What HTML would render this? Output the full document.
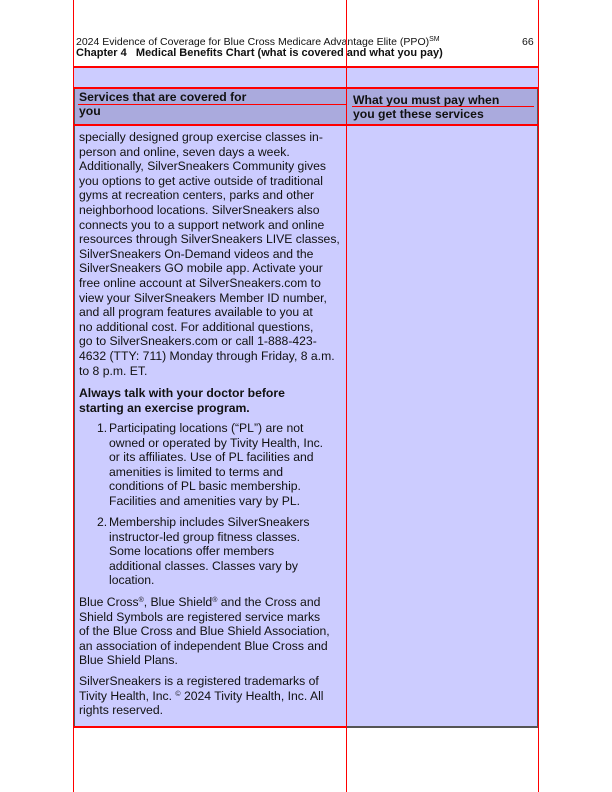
<!DOCTYPE html>
<html><head><meta charset="utf-8"><style>
body{margin:0;width:612px;height:792px;position:relative;background:#fff;font-family:"Liberation Sans",sans-serif;color:#111;overflow:hidden}
.a{position:absolute;white-space:nowrap}
.l{position:absolute;white-space:nowrap;font-size:12.2px;line-height:14px;left:79px}
.b{font-weight:bold}
.r{position:absolute;background:#f00}
sup{font-size:7px;line-height:0;vertical-align:4px}
</style></head><body>
<div class="a" style="left:76px;top:36px;font-size:10.5px;line-height:12px">2024 Evidence of Coverage for Blue Cross Medicare Advantage Elite (PPO)<sup>SM</sup></div>
<div class="a" style="left:522px;top:36px;font-size:10.5px;line-height:12px">66</div>
<div class="a b" style="left:76px;top:47px;font-size:11px;line-height:12px">Chapter 4&nbsp;&nbsp; Medical Benefits Chart (what is covered and what you pay)</div>
<div class="a" style="left:73px;top:66px;width:465px;height:661px;background:#ccccff"></div>
<div class="a" style="left:74px;top:88px;width:464px;height:37px;background:#aaaadd"></div>
<div class="a" style="left:73px;top:88px;width:2px;height:640px;background:#555"></div>
<div class="a" style="left:73px;top:726px;width:466px;height:2px;background:#555"></div>
<div class="a" style="left:537px;top:88px;width:2px;height:640px;background:#555"></div>
<div class="l b" style="top:90px">Services that are covered for</div>
<div class="l b" style="top:104px">you</div>
<div class="l b" style="left:353px;top:93px">What you must pay when</div>
<div class="l b" style="left:353px;top:107px">you get these services</div>
<div class="l" style="top:130px">specially designed group exercise classes in-</div>
<div class="l" style="top:144.6px">person and online, seven days a week.</div>
<div class="l" style="top:159.2px">Additionally, SilverSneakers Community gives</div>
<div class="l" style="top:173.8px">you options to get active outside of traditional</div>
<div class="l" style="top:188.4px">gyms at recreation centers, parks and other</div>
<div class="l" style="top:203px">neighborhood locations. SilverSneakers also</div>
<div class="l" style="top:217.6px">connects you to a support network and online</div>
<div class="l" style="top:232.2px">resources through SilverSneakers LIVE classes,</div>
<div class="l" style="top:246.8px">SilverSneakers On-Demand videos and the</div>
<div class="l" style="top:261.4px">SilverSneakers GO mobile app. Activate your</div>
<div class="l" style="top:276px">free online account at SilverSneakers.com to</div>
<div class="l" style="top:290.6px">view your SilverSneakers Member ID number,</div>
<div class="l" style="top:305.2px">and all program features available to you at</div>
<div class="l" style="top:319.8px">no additional cost. For additional questions,</div>
<div class="l" style="top:334.4px">go to SilverSneakers.com or call 1-888-423-</div>
<div class="l" style="top:349px">4632 (TTY: 711) Monday through Friday, 8 a.m.</div>
<div class="l" style="top:363.6px">to 8 p.m. ET.</div>
<div class="l b" style="top:386px">Always talk with your doctor before</div>
<div class="l b" style="top:401px">starting an exercise program.</div>
<div class="l" style="left:97px;top:421px">1.</div>
<div class="l" style="left:109px;top:421px">Participating locations (“PL”) are not</div>
<div class="l" style="left:109px;top:435.6px">owned or operated by Tivity Health, Inc.</div>
<div class="l" style="left:109px;top:450.2px">or its affiliates. Use of PL facilities and</div>
<div class="l" style="left:109px;top:464.8px">amenities is limited to terms and</div>
<div class="l" style="left:109px;top:479.4px">conditions of PL basic membership.</div>
<div class="l" style="left:109px;top:494px">Facilities and amenities vary by PL.</div>
<div class="l" style="left:97px;top:515px">2.</div>
<div class="l" style="left:109px;top:515px">Membership includes SilverSneakers</div>
<div class="l" style="left:109px;top:529.6px">instructor-led group fitness classes.</div>
<div class="l" style="left:109px;top:544.2px">Some locations offer members</div>
<div class="l" style="left:109px;top:558.8px">additional classes. Classes vary by</div>
<div class="l" style="left:109px;top:573.4px">location.</div>
<div class="l" style="top:595px">Blue Cross<sup>®</sup>, Blue Shield<sup>®</sup> and the Cross and</div>
<div class="l" style="top:609.6px">Shield Symbols are registered service marks</div>
<div class="l" style="top:624.2px">of the Blue Cross and Blue Shield Association,</div>
<div class="l" style="top:638.8px">an association of independent Blue Cross and</div>
<div class="l" style="top:653.4px">Blue Shield Plans.</div>
<div class="l" style="top:674px">SilverSneakers is a registered trademarks of</div>
<div class="l" style="top:688.6px">Tivity Health, Inc. <sup>©</sup> 2024 Tivity Health, Inc. All</div>
<div class="l" style="top:703.2px">rights reserved.</div>
<div class="r" style="left:73px;top:0;width:1px;height:792px"></div>
<div class="r" style="left:346px;top:0;width:1px;height:792px"></div>
<div class="r" style="left:538px;top:0;width:1px;height:792px"></div>
<div class="r" style="left:73px;top:66px;width:466px;height:2px"></div>
<div class="r" style="left:73px;top:87px;width:466px;height:2px"></div>
<div class="r" style="left:78px;top:104px;width:268px;height:1px"></div>
<div class="r" style="left:352px;top:106px;width:182px;height:1px"></div>
<div class="r" style="left:73px;top:124px;width:466px;height:2px"></div>
<div class="r" style="left:73px;top:726px;width:274px;height:2px"></div>
</body></html>
